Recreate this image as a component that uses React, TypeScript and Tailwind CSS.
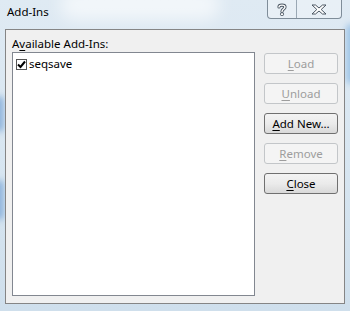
import React from "react";

const font = { fontFamily: '"Noto Sans", "Open Sans", "DejaVu Sans", sans-serif' };

type BtnProps = { label: string; hot: number; disabled?: boolean };

const DialogButton = ({ label, hot, disabled }: BtnProps) => {
  const before = label.slice(0, hot);
  const key = label.slice(hot, hot + 1);
  const after = label.slice(hot + 1);
  return (
    <button
      disabled={disabled}
      className={
        disabled
          ? "h-[21px] w-[74px] rounded-[3px] border border-[#c3c6c9] bg-[#f4f4f4] text-[11.5px] leading-none text-[#9d9d9d]"
          : "h-[21px] w-[74px] rounded-[3px] border border-[#707070] bg-gradient-to-b from-[#f3f3f3] via-[#ebebeb] to-[#d9d9d9] text-[11.5px] leading-none text-black"
      }
    >
      {before}
      <span className="underline underline-offset-2">{key}</span>
      {after}
    </button>
  );
};

export default function App() {
  return (
    <div
      style={font}
      className="relative flex h-[311px] w-[350px] flex-col overflow-hidden bg-gradient-to-b from-[#dfeaf3] via-[#d8e6f1] to-[#cfdfec]"
    >
      {/* wallpaper bleeding through the glass */}
      <div className="absolute left-[-6px] top-[96px] h-[36px] w-[10px] rounded-full bg-[#8fb4dc] blur-[3px]" />
      <div className="absolute left-[-6px] top-[180px] h-[40px] w-[10px] rounded-full bg-[#8fb4dc] blur-[3px]" />
      <div className="absolute right-[-6px] top-[24px] h-[60px] w-[10px] rounded-full bg-[#9ec4e6] blur-[3px]" />
      <div className="absolute left-[60px] top-[-10px] h-[30px] w-[160px] rounded-full bg-white/60 blur-[8px]" />

      {/* title bar */}
      <div className="relative flex h-[29px] shrink-0 items-start justify-between">
        <span className="pl-[7px] pt-[4px] text-[11.5px] leading-[16px] text-black">Add-Ins</span>
        <div className="mr-[8px] flex h-[19px] rounded-b-[4px] border border-t-0 border-[#7f8d99] bg-white/30">
          <div className="flex w-[29px] items-center justify-center border-r border-[#9aa8b4]">
            <svg width="10" height="13" viewBox="0 0 10 13">
              <path
                d="M2 4 C2 1.5 8 1.5 8 4 C8 6 5 6 5 8.5"
                fill="none"
                stroke="#4a5662"
                strokeWidth="3.2"
                strokeLinecap="round"
              />
              <path
                d="M2 4 C2 1.5 8 1.5 8 4 C8 6 5 6 5 8.5"
                fill="none"
                stroke="#ffffff"
                strokeWidth="1.4"
                strokeLinecap="round"
              />
              <circle cx="5" cy="11.2" r="1.6" fill="#ffffff" stroke="#4a5662" strokeWidth="0.9" />
            </svg>
          </div>
          <div className="flex w-[44px] items-center justify-center">
            <svg width="16" height="11" viewBox="0 0 16 11">
              <path
                d="M1 1 L4.5 1 L8 4 L11.5 1 L15 1 L10.2 5.5 L15 10 L11.5 10 L8 7 L4.5 10 L1 10 L5.8 5.5 Z"
                fill="#ffffff"
                stroke="#4a5662"
                strokeWidth="1"
                strokeLinejoin="round"
              />
            </svg>
          </div>
        </div>
      </div>

      {/* client area */}
      <div className="relative ml-[5px] flex h-[275px] w-[340px] shrink-0 border border-[#858585] bg-[#f0f0f0] pl-[6px] pt-[6px]">
        <div className="flex w-[243px] flex-col">
          <div className="h-[16px] text-[11.5px] leading-[16px] text-black">
            A<span className="underline underline-offset-2">v</span>ailable Add-Ins:
          </div>
          <div className="h-[244px] border border-[#828790] bg-white pl-[3px] pt-[3px]">
            <div className="flex items-center gap-[2px]">
              <span className="flex h-[11px] w-[11px] items-center justify-center border border-[#555555] bg-white">
                <svg width="9" height="9" viewBox="0 0 9 9">
                  <path d="M1 4.5 L3.5 7 L8 1.5" fill="none" stroke="#000" strokeWidth="2" />
                </svg>
              </span>
              <span className="text-[11.5px] leading-[16px] text-black">seqsave</span>
            </div>
          </div>
        </div>
        <div className="ml-[9px] flex flex-col gap-[9px] pt-[17px]">
          <DialogButton label="Load" hot={0} disabled />
          <DialogButton label="Unload" hot={0} disabled />
          <DialogButton label="Add New…" hot={0} />
          <DialogButton label="Remove" hot={0} disabled />
          <DialogButton label="Close" hot={0} />
        </div>
      </div>
    </div>
  );
}
